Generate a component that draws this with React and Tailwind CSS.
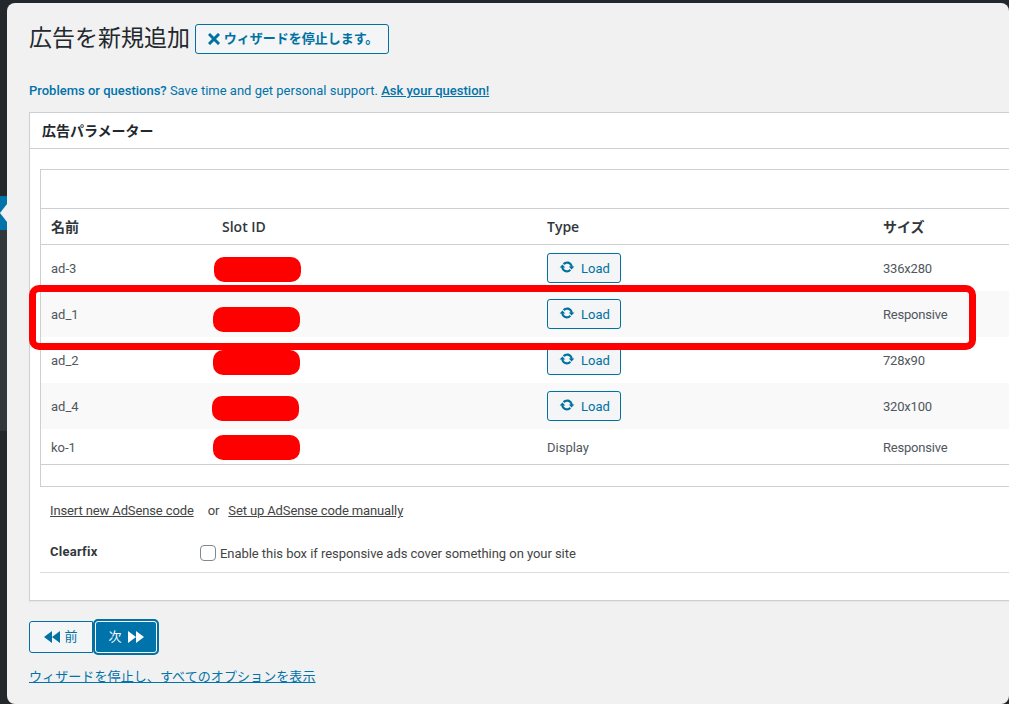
import React from "react";

const JA = "font-['Roboto','Noto_Sans_CJK_JP',sans-serif]";
const HEAD = "font-['Open_Sans','Noto_Sans_CJK_JP',sans-serif]";

const rows = [
  { name: "ad-3", load: true, size: "336x280", h: "h-[46px]" },
  { name: "ad_1", load: true, size: "Responsive", h: "h-[46px]", alt: true },
  { name: "ad_2", load: true, size: "728x90", h: "h-[46px]" },
  { name: "ad_4", load: true, size: "320x100", h: "h-[46px]", alt: true },
  { name: "ko-1", load: false, size: "Responsive", h: "h-[35px]" },
];

// red scribbles painted over the screenshot
const blobs = [
  "left-[214px] top-[257px]",
  "left-[213px] top-[307px]",
  "left-[213px] top-[350px]",
  "left-[212px] top-[396px]",
  "left-[213px] top-[435px]",
];

const UpdateIcon = () => (
  <svg viewBox="0 0 20 20" className="w-[16px] h-[16px] -mt-[3px] fill-[#0071a1]">
    <path d="M10.2 3.28c3.53 0 6.43 2.61 6.92 6h2.08l-3.5 4-3.5-4h2.32c-.45-1.97-2.21-3.45-4.32-3.45-1.45 0-2.73.71-3.54 1.78L4.95 5.66C6.23 4.2 8.11 3.28 10.2 3.28zM9.8 16.72c-3.52 0-6.43-2.61-6.92-6H.8l3.5-4c1.17 1.33 2.33 2.67 3.5 4H5.48c.45 1.97 2.21 3.45 4.32 3.45 1.45 0 2.73-.71 3.54-1.78l1.71 1.95c-1.28 1.46-3.15 2.38-5.25 2.38z" />
  </svg>
);

const LoadButton = () => (
  <button className="w-[74px] h-[30px] flex items-center justify-center gap-[6px] pl-[1px] rounded-[3px] border border-[#0071a1] bg-[#f3f5f6] text-[13px] text-[#0071a1]">
    <UpdateIcon />
    <span className="pt-[1px]">Load</span>
  </button>
);

export default function App() {
  return (
    <div className={`relative w-[1009px] h-[704px] overflow-hidden bg-[#23282d] flex pt-[3px] ${JA}`}>
      {/* admin menu edge */}
      <div className="w-[7px] shrink-0 flex flex-col pt-[193px]">
        <div className="h-[34px] bg-[#0073aa]" />
        <div className="h-[201px] bg-[#32373c]" />
      </div>

      <main className="relative flex-1 overflow-hidden rounded-[8px] bg-[#f1f1f1] pl-[22px] pt-[21px]">
        <div className="flex items-center h-[30px]">
          <h1 className="text-[23px] leading-[30px] font-normal text-[#23282d] w-[166px]">広告を新規追加</h1>
          <button className="w-[194px] h-[30px] flex items-center justify-center gap-[4px] pl-[2px] rounded-[3px] border border-[#0071a1] bg-[#f3f5f6] text-[13px] font-semibold text-[#0071a1]">
            <svg viewBox="0 0 12 12" className="w-[12px] h-[12px] stroke-[#0071a1]" strokeWidth="3" strokeLinecap="square">
              <path d="M2 2l8 8M10 2l-8 8" />
            </svg>
            <span>ウィザードを停止します。</span>
          </button>
        </div>

        <p className="mt-[28px] text-[13px] leading-[18px] text-[#0073aa]">
          <span className="font-medium">Problems or questions?</span> Save time and get personal support.{" "}
          <a className="font-medium underline">Ask your question!</a>
        </p>

        {/* ad parameters card */}
        <section className="mt-[12px] w-[1100px] h-[489px] bg-white border border-[#ccd0d4] shadow-[0_1px_1px_rgba(0,0,0,0.04)]">
          <h2 className={`h-[36px] pl-[12px] flex items-center text-[14px] font-semibold text-[#23282d] border-b border-[#ccd0d4] ${HEAD}`}>
            広告パラメーター
          </h2>

          <div className="ml-[10px] mt-[20px] mr-[12px] h-[318px] border border-[#ccd0d4]">
            <div className="h-[38px]" />
            <div className={`h-[37px] flex items-center pl-[10px] border-y border-[#ccd0d4] text-[14px] font-semibold text-[#32373c] ${HEAD}`}>
              <div className="w-[171px]">名前</div>
              <div className="w-[325px]">Slot ID</div>
              <div className="w-[336px]">Type</div>
              <div>サイズ</div>
            </div>
            {rows.map((row) => (
              <div
                key={row.name}
                className={`${row.h} flex items-center pl-[10px] text-[13px] text-[#50575e] ${row.alt ? "bg-[#f9f9f9]" : ""} ${row.load ? "" : "pt-[1px]"}`}
              >
                <div className="w-[171px] pt-[1px]">{row.name}</div>
                <div className="w-[325px]" />
                <div className="w-[336px]">{row.load ? <LoadButton /> : <span className="pt-[1px] block">Display</span>}</div>
                <div className="pt-[1px] tracking-[-0.2px]">{row.size}</div>
              </div>
            ))}
            <div className="border-t border-[#ccd0d4]" />
          </div>

          <div className="ml-[20px] mt-[15px] h-[18px] flex items-center text-[13px] leading-[18px] tracking-[-0.12px] text-[#444]">
            <a className="underline">Insert new AdSense code</a>
            <span className="ml-[14px] mr-[9px]">or</span>
            <a className="underline">Set up AdSense code manually</a>
          </div>

          <div className="ml-[10px] mr-[12px] mt-[18px] h-[35px] pl-[10px] flex border-b border-[#dcdcde] text-[13px] text-[#444]">
            <div className="w-[150px] font-bold text-[#32373c] pt-[4px] tracking-[0.25px]">Clearfix</div>
            <label className="flex items-start pt-[6px] gap-[4px]">
              <span className="w-[16px] h-[16px] mt-[1px] rounded-[4px] border border-[#7e8993] bg-white" />
              <span className="tracking-[-0.05px]">Enable this box if responsive ads cover something on your site</span>
            </label>
          </div>
        </section>

        <div className="mt-[18px] flex items-center h-[36px]">
          <button className="w-[64px] h-[32px] flex items-center justify-center gap-[4px] rounded-l-[3px] border border-[#0071a1] bg-[#f3f5f6] text-[13px] text-[#0071a1]">
            <svg viewBox="0 0 16 12" className="w-[16px] h-[12px] fill-[#0071a1]">
              <path d="M0 6l8-6v12zM8 6l8-6v12z" />
            </svg>
            <span>前</span>
          </button>
          <button className="w-[66px] h-[36px] flex items-center justify-center gap-[6px] rounded-[5px] bg-[#0073aa] border-2 border-[#0071a1] shadow-[inset_0_0_0_1px_#fff] text-[13px] text-white">
            <span>次</span>
            <svg viewBox="0 0 16 12" className="w-[16px] h-[12px] fill-white">
              <path d="M0 0l8 6-8 6zM8 0l8 6-8 6z" />
            </svg>
          </button>
        </div>

        <a className="block mt-[13px] text-[13px] leading-[18px] tracking-[0.09px] underline text-[#0073aa]">
          ウィザードを停止し、すべてのオプションを表示
        </a>
      </main>

      {/* arrow of the current menu item */}
      <div className="absolute left-0 top-[204px] w-0 h-0 border-y-[9px] border-y-transparent border-r-[7px] border-r-[#f1f1f1]" />

      {/* red annotations */}
      {blobs.map((pos) => (
        <div key={pos} className={`absolute ${pos} w-[87px] h-[25px] rounded-[10px] bg-[#ff0000]`} />
      ))}
      <div className="absolute left-[29px] top-[285px] w-[947px] h-[65px] rounded-[10px] border-[7px] border-[#ff0000]" />
    </div>
  );
}
